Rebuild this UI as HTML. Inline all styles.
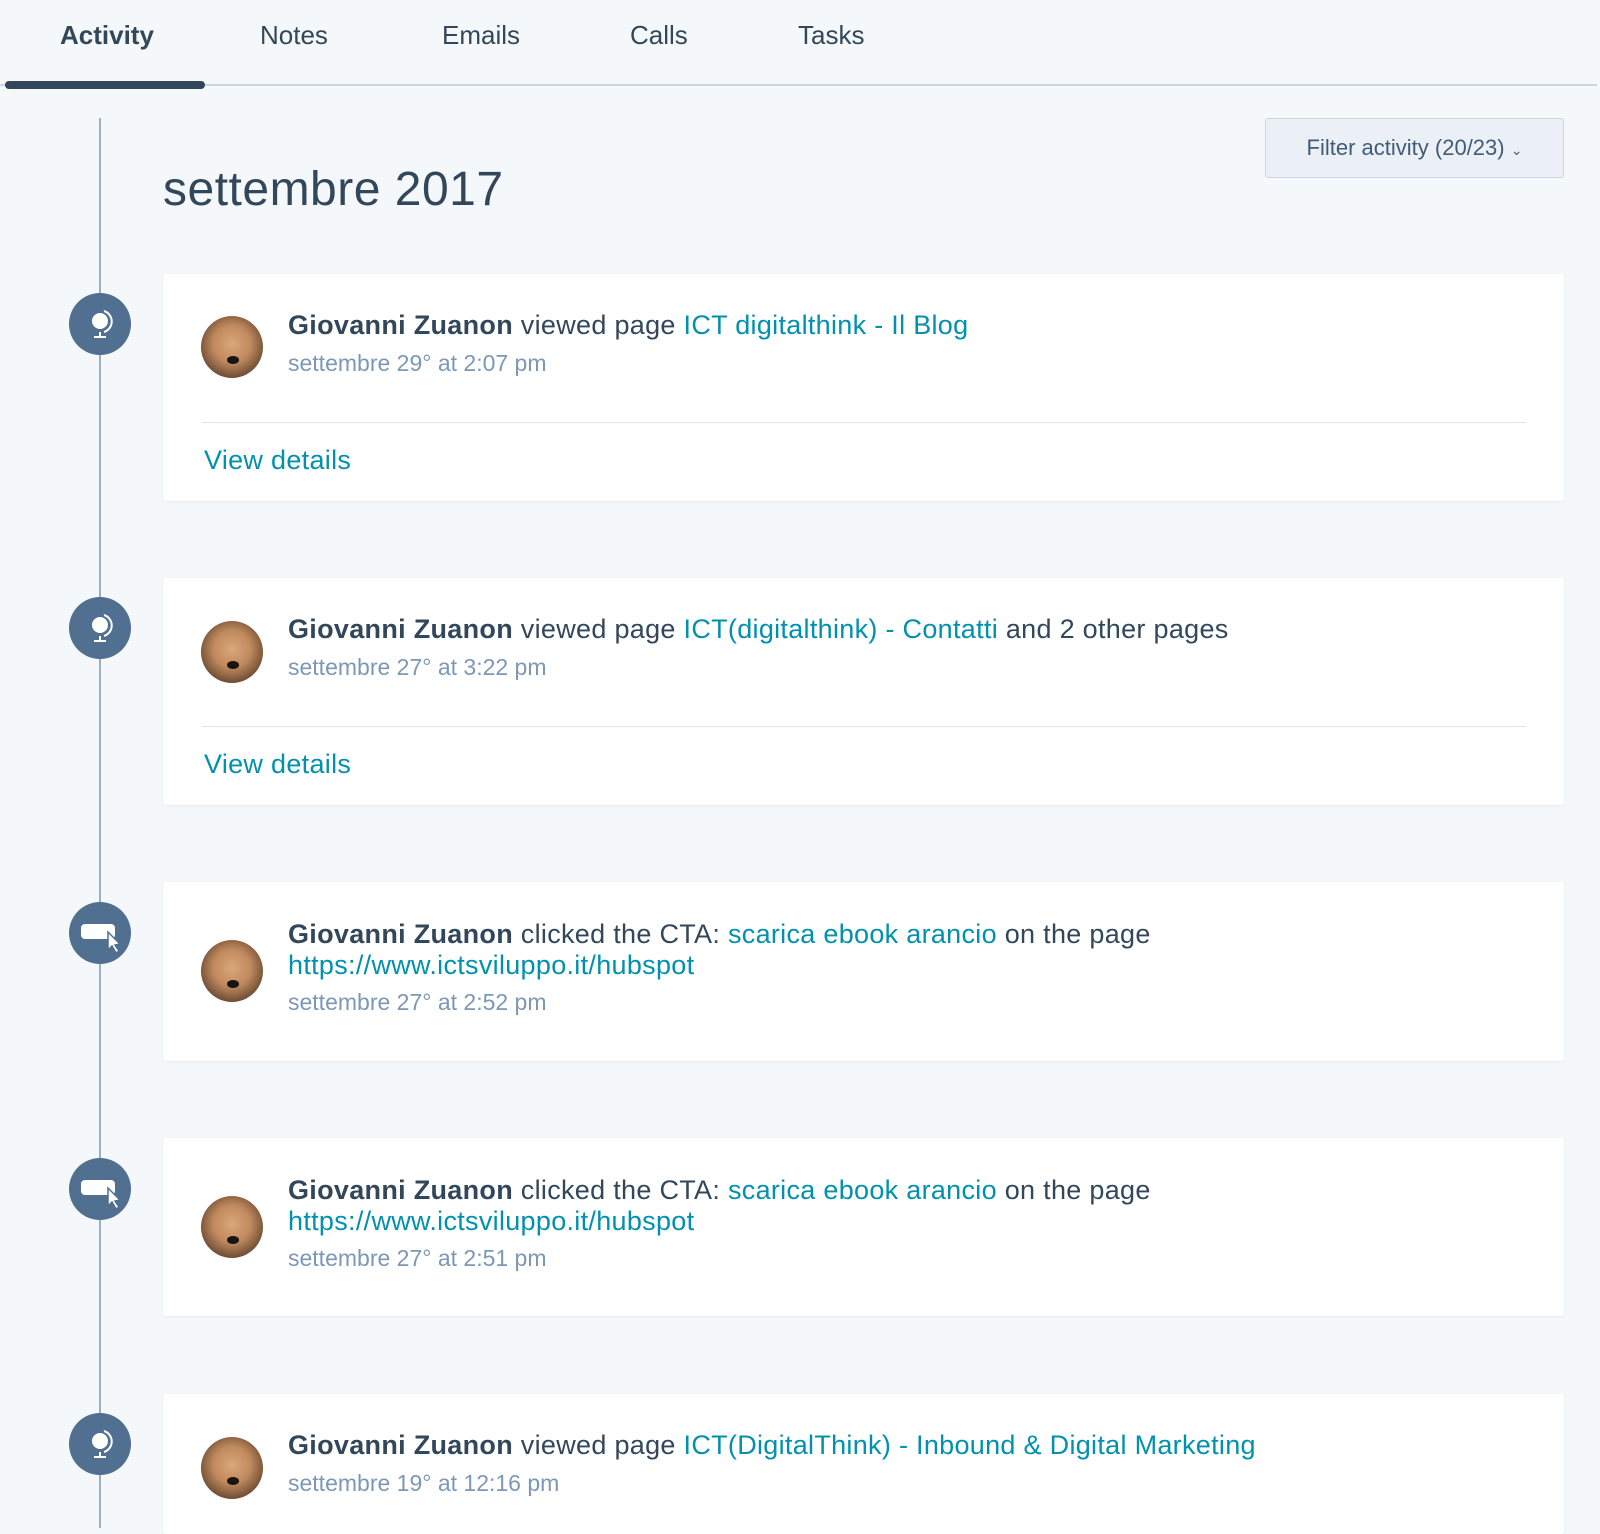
<!DOCTYPE html>
<html><head><meta charset="utf-8"><style>
*{margin:0;padding:0;box-sizing:border-box}
body{width:1600px;height:1520px;background:#f5f8fa;font-family:"Liberation Sans",sans-serif;color:#33475b;position:relative;overflow:hidden}
.a{position:absolute;white-space:nowrap}
.tab{font-size:26px;top:20px;color:#33475b}
.card{position:absolute;left:163px;width:1401px;background:#fff;border-radius:3px;box-shadow:0 1px 3px rgba(0,0,0,.06)}
.circ{position:absolute;left:69px;width:62px;height:62px;border-radius:50%;background:#516f90}
.av{position:absolute;left:201px;width:62px;height:62px;border-radius:50%;background:radial-gradient(circle at 50% 45%,#d9a77a 0,#c08a5e 40%,#6b4a33 75%,#3b2a20 100%)}
.av:after{content:"";position:absolute;left:26px;top:40px;width:12px;height:8px;border-radius:50%;background:#1a1410}
.t{font-size:27px;color:#33475b;letter-spacing:0.3px}
.t b{font-weight:600}
.l{color:#0091ae}
.d{font-size:23px;color:#7c98b6}
.hr{position:absolute;left:202px;width:1324px;height:1px;background:#dfe3eb}
.vd{font-size:27px;color:#0091ae;letter-spacing:0.3px}
</style></head><body>
<div class="a tab" style="left:60px;font-weight:600">Activity</div>
<div class="a tab" style="left:260px">Notes</div>
<div class="a tab" style="left:442px">Emails</div>
<div class="a tab" style="left:630px">Calls</div>
<div class="a tab" style="left:798px">Tasks</div>
<div class="a" style="left:0;top:84px;width:1597px;height:2px;background:#cbd6e2"></div>
<div class="a" style="left:5px;top:81px;width:200px;height:8px;border-radius:4px;background:#33475b"></div>
<div class="a" style="left:99px;top:118px;width:2px;height:1410px;background:#99afc4"></div>
<div class="a" style="left:163px;top:162px;font-size:48px;color:#33475b;letter-spacing:0.5px">settembre 2017</div>
<div class="a" style="left:1265px;top:118px;width:299px;height:60px;border:1px solid #cbd6e2;border-radius:3px;background:#eaf0f6;font-size:22px;color:#425b76;text-align:center;line-height:58px">Filter activity (20/23) <span style="font-size:14px">⌄</span></div>

<div class="card" style="top:274px;height:227px"></div>
<div class="card" style="top:578px;height:227px"></div>
<div class="card" style="top:882px;height:179px"></div>
<div class="card" style="top:1138px;height:178px"></div>
<div class="card" style="top:1394px;height:140px"></div>

<svg width="0" height="0" style="position:absolute"><defs>
<g id="globe"><circle cx="0" cy="-3" r="8" fill="#fff"/><path d="M4,-13 A11,11 0 0 1 4,8" stroke="#fff" stroke-width="2" fill="none"/><path d="M0,8 V12 M-6,13 H6" stroke="#fff" stroke-width="2"/></g>
<g id="cta"><rect x="-19" y="-9" width="34" height="15" rx="4" fill="#fff"/><path d="M8,-1 L8,17 L12,13 L16,20 L19,18 L15,12 L20,11 Z" fill="#fff" stroke="#516f90" stroke-width="1.5"/></g>
</defs></svg>
<div class="circ" style="top:293px"><svg width="62" height="62"><use href="#globe" x="31" y="31"/></svg></div>
<div class="circ" style="top:597px"><svg width="62" height="62"><use href="#globe" x="31" y="31"/></svg></div>
<div class="circ" style="top:902px"><svg width="62" height="62"><use href="#cta" x="31" y="31"/></svg></div>
<div class="circ" style="top:1158px"><svg width="62" height="62"><use href="#cta" x="31" y="31"/></svg></div>
<div class="circ" style="top:1413px"><svg width="62" height="62"><use href="#globe" x="31" y="31"/></svg></div>

<div class="av" style="top:316px"></div>
<div class="a t" style="left:288px;top:310px"><b>Giovanni Zuanon</b> viewed page <span class="l">ICT digitalthink - Il Blog</span></div>
<div class="a d" style="left:288px;top:350px">settembre 29° at 2:07 pm</div>
<div class="hr" style="top:422px"></div>
<div class="a vd" style="left:204px;top:445px">View details</div>

<div class="av" style="top:621px"></div>
<div class="a t" style="left:288px;top:614px"><b>Giovanni Zuanon</b> viewed page <span class="l">ICT(digitalthink) - Contatti</span> and 2 other pages</div>
<div class="a d" style="left:288px;top:654px">settembre 27° at 3:22 pm</div>
<div class="hr" style="top:726px"></div>
<div class="a vd" style="left:204px;top:749px">View details</div>

<div class="av" style="top:940px"></div>
<div class="a t" style="left:288px;top:919px"><b>Giovanni Zuanon</b> clicked the CTA: <span class="l">scarica ebook arancio</span> on the page</div>
<div class="a t l" style="left:288px;top:950px">https://www.ictsviluppo.it/hubspot</div>
<div class="a d" style="left:288px;top:989px">settembre 27° at 2:52 pm</div>

<div class="av" style="top:1196px"></div>
<div class="a t" style="left:288px;top:1175px"><b>Giovanni Zuanon</b> clicked the CTA: <span class="l">scarica ebook arancio</span> on the page</div>
<div class="a t l" style="left:288px;top:1206px">https://www.ictsviluppo.it/hubspot</div>
<div class="a d" style="left:288px;top:1245px">settembre 27° at 2:51 pm</div>

<div class="av" style="top:1437px"></div>
<div class="a t" style="left:288px;top:1430px"><b>Giovanni Zuanon</b> viewed page <span class="l">ICT(DigitalThink) - Inbound &amp; Digital Marketing</span></div>
<div class="a d" style="left:288px;top:1470px">settembre 19° at 12:16 pm</div>
</body></html>
